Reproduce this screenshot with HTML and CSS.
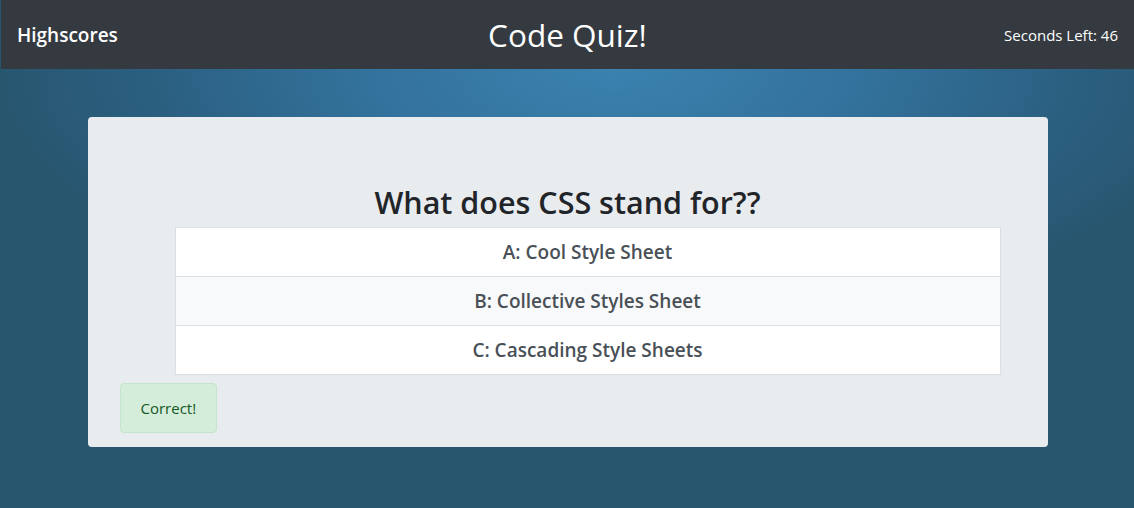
FILE: index.html
```html
<!DOCTYPE html>
<html lang="en">
<head>
<meta charset="utf-8">
<title>Code Quiz!</title>
<link rel="stylesheet" href="styles.css">
</head>
<body>
<div class="page">
  <nav class="navbar">
    <a class="brand" href="#">Highscores</a>
    <h1 class="title">Code Quiz!</h1>
    <span class="timer">Seconds Left: 46</span>
  </nav>
  <main class="stage">
    <section class="card">
      <h2 class="question">What does CSS stand for??</h2>
      <ul class="answers">
        <li class="answer">A: Cool Style Sheet</li>
        <li class="answer alt">B: Collective Styles Sheet</li>
        <li class="answer">C: Cascading Style Sheets</li>
      </ul>
      <div class="alert">Correct!</div>
    </section>
  </main>
</div>
</body>
</html>
```

FILE: styles.css
```css
* { box-sizing: border-box; }
html, body { margin: 0; padding: 0; height: 100%; }
body {
  font-family: "Open Sans", "Noto Sans", sans-serif;
  background: #28566f;
  overflow: hidden;
}
.page {
  margin-left: 1px;
  min-height: 100%;
  display: flex;
  flex-direction: column;
  background: radial-gradient(ellipse 620px 260px at 54% 69px, #3b82b0 0%, #33729c 40%, #2b5f80 75%, #28566f 100%);
}
.navbar {
  height: 69px;
  background: #343a40;
  display: grid;
  grid-template-columns: 1fr auto 1fr;
  align-items: center;
  padding: 0 16px;
}
.brand {
  color: #fff;
  text-decoration: none;
  font-size: 19px;
  font-weight: 600;
  justify-self: start;
}
.title {
  margin: 0;
  color: #fff;
  font-size: 31.5px;
  font-weight: 500;
  line-height: 1.2;
}
.timer {
  color: #fff;
  font-size: 15px;
  justify-self: end;
}
.stage {
  flex: 1;
  padding-top: 48px;
  display: flex;
  justify-content: center;
  align-items: flex-start;
}
.card {
  width: 960px;
  background: #e9ecef;
  border-radius: 4px;
  padding: 66px 32px 14px;
}
.question {
  margin: 0 0 6px;
  text-align: center;
  font-size: 30.5px;
  font-weight: 600;
  line-height: 38px;
  color: #212529;
}
.answers {
  list-style: none;
  margin: 0 15px 8px 55px;
  padding: 0;
}
.answer {
  background: #fff;
  border: 1px solid #dcdfe2;
  margin-top: -1px;
  padding: 12px 20px;
  text-align: center;
  font-size: 19px;
  font-weight: 600;
  line-height: 24px;
  color: #495057;
}
.answer:first-child { margin-top: 0; }
.answer.alt { background: #f8f9fa; }
.alert {
  display: inline-block;
  background: #d4edda;
  border: 1px solid #c3e6cb;
  color: #155724;
  border-radius: 4px;
  padding: 12px 20px;
  font-size: 15px;
  line-height: 24px;
}
```
